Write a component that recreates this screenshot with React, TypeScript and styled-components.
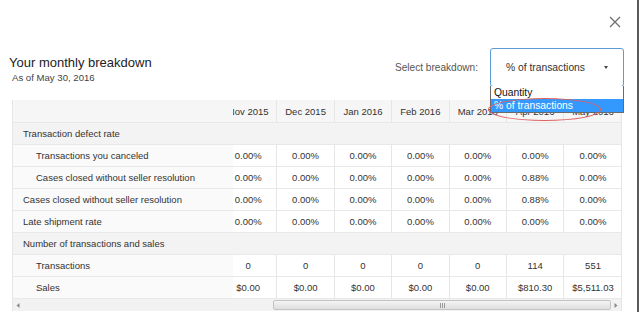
import styled, { createGlobalStyle } from "styled-components";

const GlobalStyle = createGlobalStyle`
  html, body {
    margin: 0;
    padding: 0;
    background: #ffffff;
  }
  body {
    font-family: "Liberation Sans", Arial, sans-serif;
    color: #333333;
  }
`;

const Page = styled.div`
  width: 637px;
  height: 312px;
  border-right: 2px solid #5a5a5a;
  background: #ffffff;
  overflow: hidden;
`;

const TopBar = styled.div`
  height: 48px;
  box-sizing: border-box;
  display: flex;
  justify-content: flex-end;
  align-items: flex-start;
  padding: 16px 16px 0 0;
`;

const CloseButton = styled.button`
  width: 12px;
  height: 12px;
  padding: 0;
  border: none;
  background: transparent;
  display: flex;
  cursor: pointer;
`;

const Header = styled.div`
  display: flex;
  justify-content: space-between;
  align-items: flex-start;
  padding: 0 13px 0 9px;
  height: 52px;
`;

const TitleBlock = styled.div`
  display: flex;
  flex-direction: column;
  margin-top: 7px;
`;

const Title = styled.span`
  font-size: 13px;
  line-height: 15px;
  color: #222222;
`;

const Subtitle = styled.span`
  font-size: 9.6px;
  line-height: 12px;
  color: #444444;
  margin: 2px 0 0 3px;
`;

const Breakdown = styled.div`
  display: flex;
  align-items: center;
  gap: 12px;
`;

const BreakdownLabel = styled.span`
  font-size: 10.1px;
  color: #555555;
`;

const Select = styled.div`
  position: relative;
  width: 134px;
  height: 39px;
  box-sizing: border-box;
  border: 1px solid #5b9bd5;
  border-radius: 3px;
  display: flex;
  align-items: center;
  justify-content: space-between;
  padding: 0 15px;
  font-size: 10.3px;
  color: #333333;
`;

const Caret = styled.span`
  width: 0;
  height: 0;
  border-left: 2.5px solid transparent;
  border-right: 2.5px solid transparent;
  border-top: 3px solid #444444;
`;

const OptionList = styled.div`
  position: absolute;
  top: 100%;
  left: -1px;
  width: 134px;
  box-sizing: border-box;
  border: 1px solid #6a6a6a;
  border-top: none;
  background: #ffffff;
  z-index: 2;
`;

const Option = styled.div<{ $active?: boolean }>`
  height: 13px;
  line-height: 13px;
  padding-left: 3px;
  font-size: 10.3px;
  color: ${({ $active }) => ($active ? "#ffffff" : "#111111")};
  background: ${({ $active }) => ($active ? "#3399ff" : "#ffffff")};
`;

const Annotation = styled.div`
  position: absolute;
  left: -3px;
  top: 49px;
  width: 111px;
  height: 21px;
  border: 1px solid #e06060;
  border-radius: 50%;
  z-index: 3;
  pointer-events: none;
`;

const Table = styled.div`
  margin: 0 15px 0 12px;
  border-left: 1px solid #e6e6e6;
  border-right: 1px solid #e6e6e6;
  box-sizing: border-box;
  font-size: 9.5px;
  color: #333333;
`;

const Row = styled.div<{ $tone: "head" | "section" | "item" }>`
  display: flex;
  height: ${({ $tone }) => ($tone === "head" ? "23px" : "22px")};
  border-bottom: 1px solid #e8e8e8;
  box-sizing: border-box;
  background: ${({ $tone }) =>
    $tone === "head" ? "#f6f6f6" : $tone === "section" ? "#f3f3f3" : "#ffffff"};
`;

const Label = styled.div<{ $indent?: boolean; $plain?: boolean }>`
  width: 220px;
  flex: none;
  display: flex;
  align-items: center;
  padding-left: ${({ $indent }) => ($indent ? "23px" : "10px")};
  box-sizing: border-box;
  background: ${({ $plain }) => ($plain ? "transparent" : "#fafafa")};
  white-space: nowrap;
`;

const Cells = styled.div`
  flex: 1;
  overflow: hidden;
`;

const Track = styled.div`
  display: grid;
  grid-template-columns: repeat(7, 57.4px);
  margin-left: -13px;
  height: 100%;
`;

const Cell = styled.div`
  display: flex;
  align-items: center;
  justify-content: center;
  border-right: 1px solid #e6e6e6;
  white-space: nowrap;
  &:last-child {
    border-right: none;
  }
`;

const Scrollbar = styled.div`
  display: flex;
  align-items: stretch;
  height: 12px;
  background: #f2f2f2;
`;

const Arrow = styled.div`
  width: 10px;
  flex: none;
  display: flex;
  align-items: center;
  justify-content: center;
`;

const ScrollTrack = styled.div`
  flex: 1;
  display: flex;
  justify-content: flex-end;
  padding: 1px 0;
`;

const Thumb = styled.div`
  width: 338px;
  box-sizing: border-box;
  border: 1px solid #c4c4c4;
  border-radius: 2px;
  background: linear-gradient(#f4f4f4, #dedede);
  display: flex;
  align-items: center;
  justify-content: center;
`;

type RowData = {
  label: string;
  kind: "section" | "item" | "sub";
  values?: string[];
};

const months = [
  "Nov 2015",
  "Dec 2015",
  "Jan 2016",
  "Feb 2016",
  "Mar 2016",
  "Apr 2016",
  "May 2016",
];

const zeros = ["0.00%", "0.00%", "0.00%", "0.00%", "0.00%"];

const rows: RowData[] = [
  { label: "Transaction defect rate", kind: "section" },
  { label: "Transactions you canceled", kind: "sub", values: [...zeros, "0.00%", "0.00%"] },
  { label: "Cases closed without seller resolution", kind: "sub", values: [...zeros, "0.88%", "0.00%"] },
  { label: "Cases closed without seller resolution", kind: "item", values: [...zeros, "0.88%", "0.00%"] },
  { label: "Late shipment rate", kind: "item", values: [...zeros, "0.00%", "0.00%"] },
  { label: "Number of transactions and sales", kind: "section" },
  { label: "Transactions", kind: "sub", values: ["0", "0", "0", "0", "0", "114", "551"] },
  {
    label: "Sales",
    kind: "sub",
    values: ["$0.00", "$0.00", "$0.00", "$0.00", "$0.00", "$810.30", "$5,511.03"],
  },
];

const CloseIcon = () => (
  <svg width="12" height="12" viewBox="0 0 12 12">
    <path d="M1 1L11 11M11 1L1 11" stroke="#6f6f6f" strokeWidth="1.3" />
  </svg>
);

const Grip = () => (
  <svg width="7" height="5" viewBox="0 0 7 5">
    <path d="M1.5 0V5M3.5 0V5M5.5 0V5" stroke="#9a9a9a" strokeWidth="1" />
  </svg>
);

const ArrowIcon = ({ dir }: { dir: "left" | "right" }) => (
  <svg width="4" height="5" viewBox="0 0 4 5">
    <path d={dir === "left" ? "M3.5 0L0.5 2.5L3.5 5Z" : "M0.5 0L3.5 2.5L0.5 5Z"} fill="#8a8a8a" />
  </svg>
);

export default function App() {
  return (
    <Page>
      <GlobalStyle />
      <TopBar>
        <CloseButton aria-label="Close">
          <CloseIcon />
        </CloseButton>
      </TopBar>
      <Header>
        <TitleBlock>
          <Title>Your monthly breakdown</Title>
          <Subtitle>As of May 30, 2016</Subtitle>
        </TitleBlock>
        <Breakdown>
          <BreakdownLabel>Select breakdown:</BreakdownLabel>
          <Select>
            <span>% of transactions</span>
            <Caret />
            <OptionList>
              <Option>Quantity</Option>
              <Option $active>% of transactions</Option>
            </OptionList>
            <Annotation />
          </Select>
        </Breakdown>
      </Header>
      <Table>
        <Row $tone="head">
          <Label $plain />
          <Cells>
            <Track>
              {months.map((m) => (
                <Cell key={m}>{m}</Cell>
              ))}
            </Track>
          </Cells>
        </Row>
        {rows.map((row, i) =>
          row.kind === "section" ? (
            <Row key={i} $tone="section">
              <Label $plain>{row.label}</Label>
            </Row>
          ) : (
            <Row key={i} $tone="item">
              <Label $indent={row.kind === "sub"}>{row.label}</Label>
              <Cells>
                <Track>
                  {row.values?.map((v, j) => (
                    <Cell key={j}>{v}</Cell>
                  ))}
                </Track>
              </Cells>
            </Row>
          )
        )}
        <Scrollbar>
          <Arrow>
            <ArrowIcon dir="left" />
          </Arrow>
          <ScrollTrack>
            <Thumb>
              <Grip />
            </Thumb>
          </ScrollTrack>
          <Arrow>
            <ArrowIcon dir="right" />
          </Arrow>
        </Scrollbar>
      </Table>
    </Page>
  );
}
